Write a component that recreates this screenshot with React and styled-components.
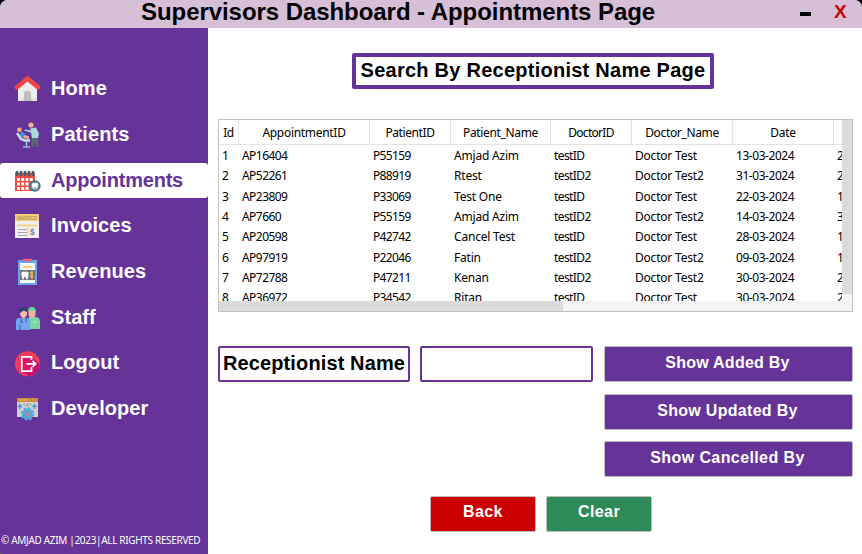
import React from "react";
import styled, { createGlobalStyle } from "styled-components";

const GlobalStyle = createGlobalStyle`
  * { box-sizing: border-box; }
  body { margin: 0; background: #000; overflow: hidden; }
`;

const purple = "#663399";
const ui = `"Liberation Sans", Arial, sans-serif`;
const tableFont = `"Noto Sans", sans-serif`;

const Window = styled.div`
  width: 862px;
  height: 554px;
  display: grid;
  grid-template-columns: 208px 1fr;
  grid-template-rows: 28px 1fr;
  background: #fff;
  border-radius: 8px 8px 0 2px;
  overflow: hidden;
  font-family: ${ui};
`;

const TitleBar = styled.header`
  grid-column: 1 / -1;
  background: #d8bfd8;
  display: flex;
  padding-left: 141px;
`;

const Title = styled.h1`
  margin: 0;
  width: 658px;
  height: 28px;
  font-size: 24px;
  line-height: 24px;
  letter-spacing: -0.06px;
  white-space: nowrap;
`;

const MinimizeButton = styled.button`
  width: 11px;
  height: 4px;
  margin: 12px 23px 0 1px;
  padding: 0;
  border: 0;
  background: #000;
`;

const CloseButton = styled.button`
  border: 0;
  padding: 0;
  height: 24px;
  background: none;
  color: #c00;
  font: bold 19px/24px ${ui};
`;

const Sidebar = styled.aside`
  background: ${purple};
  display: flex;
  flex-direction: column;
  justify-content: space-between;
`;

const Menu = styled.nav`
  padding-top: 43.2px;
  display: grid;
  grid-auto-rows: 35px;
  row-gap: 10.7px;
`;

const MenuItem = styled.a`
  display: flex;
  gap: 10px;
  padding-left: 14px;
  height: 35px;
  border-radius: 3px;
  background: ${(p) => (p.$active ? "#fff" : "transparent")};
  color: ${(p) => (p.$active ? purple : "#fff")};
  font-size: 20px;
  font-weight: bold;
  line-height: 34px;
  letter-spacing: ${(p) => p.$spacing || 0}px;
`;

const Icon = styled.svg`
  width: 27px;
  height: 27px;
  margin-top: 4.2px;
  flex: none;
`;

const Copyright = styled.footer`
  height: 27px;
  padding-left: 1px;
  color: #fff;
  font: 10px/26px ${tableFont};
  letter-spacing: -0.33px;
  white-space: nowrap;
`;

const Main = styled.main`
  padding: 25px 9px 0 10px;
  display: flex;
  flex-direction: column;
`;

const PageHeading = styled.h2`
  align-self: center;
  margin: 0 5px 0 0;
  width: 362px;
  height: 36px;
  border: 4px solid ${purple};
  border-radius: 2px;
  font-size: 20px;
  line-height: 26px;
  letter-spacing: 0.25px;
  text-align: center;
  white-space: nowrap;
`;

const TableFrame = styled.section`
  margin-top: 30px;
  width: 635px;
  height: 193px;
  border: 1px solid #c2c2c2;
  display: grid;
  grid-template-columns: 623px 10px;
  grid-template-rows: 181px 10px;
`;

const Viewport = styled.div`
  overflow: hidden;
`;

const Table = styled.table`
  width: 724px;
  table-layout: fixed;
  border-collapse: separate;
  border-spacing: 0;
  font: 12px/20px ${tableFont};
  color: #000;
`;

const HeadCell = styled.th`
  height: 25px;
  padding: 1px 0 0;
  border-right: 1px solid #e4e4e4;
  border-bottom: 1px solid #e4e4e4;
  font-weight: normal;
  line-height: 23px;
  letter-spacing: ${(p) => p.$spacing}px;
  text-align: center;
`;

const Cell = styled.td`
  height: 20.33px;
  padding: 0 0 0 3px;
  line-height: 20px;
  white-space: nowrap;
  letter-spacing: ${(p) => p.$spacing}px;
`;

const TableBody = styled.tbody`
  &::before { content: ""; display: block; height: 1px; }
`;

const VerticalTrack = styled.div`
  grid-row: 1 / 3;
  grid-column: 2;
  background: #f4f4f4;
`;

const VerticalThumb = styled.div`
  height: 174px;
  background: #dbdbdb;
`;

const HorizontalTrack = styled.div`
  background: #f4f4f4;
`;

const HorizontalThumb = styled.div`
  width: 344px;
  height: 10px;
  background: #dbdbdb;
`;

const SearchRow = styled.div`
  margin-top: 34px;
  display: grid;
  grid-template-columns: 192px 173px 249px;
  column-gap: 10px;
`;

const FieldLabel = styled.label`
  height: 36px;
  border: 2px solid ${purple};
  border-radius: 2px;
  font-size: 20px;
  font-weight: bold;
  line-height: 31px;
  letter-spacing: 0.12px;
  text-align: center;
  white-space: nowrap;
`;

const NameInput = styled.input`
  width: 100%;
  height: 36px;
  border: 2px solid ${purple};
  border-radius: 2px;
  background: #fff;
  outline: none;
`;

const ActionColumn = styled.div`
  display: grid;
  row-gap: 11.6px;
  padding-left: 1px;
`;

const Button = styled.button`
  width: ${(p) => p.$width || 249}px;
  height: 36px;
  padding: 0 ${(p) => (p.$width ? 0 : 2)}px ${(p) => (p.$width ? 4 : 2)}px 0;
  border: 1px solid #bdbdbd;
  border-radius: 2px;
  background: ${(p) => p.$color || purple};
  color: #fff;
  font: bold 16px/30px ${ui};
  letter-spacing: ${(p) => p.$spacing || 0.4}px;
`;

const FooterActions = styled.div`
  margin: 18.8px 0 0 212px;
  display: flex;
  gap: 10px;
`;

const icons = {
  Home: (
    <>
      <path d="M4 11 13.5 3 23 11v15H4z" fill="#ededed" />
      <path d="M4 23h19v3H4z" fill="#e2e2e2" />
      <path d="M10 26v-8q0-2 2-2h3q2 0 2 2v8z" fill="#bfbfbf" />
      <path d="m3 12.3 10.5-8.8L24 12.3" fill="none" stroke="#eb4747" strokeWidth="4.6" strokeLinejoin="round" strokeLinecap="round" />
    </>
  ),
  Patients: (
    <>
      <circle cx="17" cy="4" r="2.6" fill="#f5b092" />
      <path d="m16 7.5 6-1 3 6-1 5h-6l-1-6-7-2 1-1 6 1z" fill="#abd7dd" />
      <path d="M18 17h6l1 9h-3l-1-6-1 6h-3z" fill="#596878" />
      <circle cx="5.4" cy="8.8" r="2.3" fill="#f5a68d" />
      <path d="m7 10 5 4-1 4-5-3z" fill="#3f98e9" />
      <path d="m11 14 4 1.5V18l-6-1z" fill="#f5aa8d" />
      <path d="m3 12 4 6 4 1.5h5" fill="none" stroke="#c8e5e9" strokeWidth="2.3" />
      <path d="M12.5 20v5M9 26h7" stroke="#94c9d0" strokeWidth="1.5" />
    </>
  ),
  Appointments: (
    <>
      <path d="M1 6h20v18H1z" fill="#e94d40" />
      <path d="M3 12.5h17M3 17h14M3 21.5h13" stroke="#fff" strokeWidth="2.8" strokeDasharray="2.9 1.4" />
      <path d="M1 6.5h20" stroke="#b75549" strokeWidth="2" />
      <path d="M3 4v5M7 4v5M11 4v5M15 4v5M19 4v5" stroke="#3c6478" strokeWidth="2.2" />
      <circle cx="21" cy="19" r="4.8" fill="#8faebb" stroke="#457185" strokeWidth="1.7" />
      <path d="M18 16.4q1.5-1 3 0 1.5-1 3 0 .5 2.8-1.4 5.4L21 19.7l-1.6 2.1q-1.9-2.6-1.4-5.4z" fill="#fff" />
    </>
  ),
  Invoices: (
    <>
      <path d="M1 2h24v24H1z" fill="#f1eff1" />
      <path d="M1 2h24v7H1z" fill="#f4cc78" />
      <text x="13" y="7.6" fill="#a99573" fontFamily="Liberation Sans" fontSize="5.4" fontWeight="bold" textLength="20" lengthAdjust="spacingAndGlyphs" textAnchor="middle">INVOICE</text>
      <path d="M3 13.5h20" stroke="#f5d289" strokeWidth="2" />
      <path d="M4 17.5h9M4 20.5h9M4 23.5h9" stroke="#a5a3af" strokeWidth="1" />
      <path d="M14 15v10" stroke="#f5d289" />
      <text x="15.9" y="22.8" fill="#7e819a" fontFamily="Liberation Sans" fontSize="8.5">$</text>
    </>
  ),
  Revenues: (
    <>
      <path d="M4 2h19v25H4z" fill="#6aa6ee" />
      <path d="M6 5h15v20H6z" fill="#f8f8f8" />
      <path d="M10 3.5V2h7v1.5" stroke="#eb5d7b" strokeWidth="2.5" fill="none" />
      <path d="M9 9h9" stroke="#f6cf70" strokeWidth="2" />
      <path d="M6 12h15v10H6z" fill="#747178" />
      <path d="M7.5 14q3-1 3.5 0 .5-1 3.5 0v4l-1 3.5h-1L11 18l-1.5 3.5h-1l-1-3.5z" fill="#fff" />
      <path d="M18 13v8M16 15h3M16 18h3" stroke="#e7bb58" strokeWidth="1.5" />
    </>
  ),
  Staff: (
    <>
      <path d="m14 14 2-1h6l3 1 1 3v8H14z" fill="#76d6a4" />
      <path d="M2 26v-9q0-3 4-3h6q4 0 4 3v9z" fill="#72a5f2" />
      <path d="M6 7q0-3 3.5-3T13 7v3q-1 4-3.5 4T6 10z" fill="#f7b9aa" />
      <path d="M5 7q-.5-4 3-3.5 5-.7 5 1.5v3L9.5 6.5 6 9z" fill="#303d71" />
      <path d="M14.5 7q1-2 3.5-2t3.5 2v4q-1 3-3.5 3T14.5 11z" fill="#f3b29d" />
      <path d="M14 7.5q0-4.5 4-4.5t4 4.5l-4-1z" fill="#6bd498" />
      <path d="M7 14.5V17q0 2.5 2 1M12 14v4M6 21v5" stroke="#405888" fill="none" strokeWidth="1" />
      <path d="M19.5 18h3" stroke="#d8f4e4" />
    </>
  ),
  Logout: (
    <>
      <circle cx="13.5" cy="13.8" r="12.5" fill="#f73b5c" />
      <path d="m17 6.5 9 8q-1 10-11 11.5l-7-5z" fill="#c5126e" />
      <path d="M8 7h9v14H8z" fill="#d9156a" />
      <path d="M17.5 10V6.8H7.8v14.4h9.7V17M12.5 13.8h9M18.5 10.8l3 3-3 3" fill="none" stroke="#fff" strokeWidth="1.7" />
    </>
  ),
  Developer: (
    <>
      <path d="M3 3h21v19H3z" fill="#d1d0d3" />
      <path d="M3 3h21v4H3z" fill="#c68c38" />
      <path d="M5 5h9M18 5h1M21 5h1" stroke="#f7c05c" />
      <path d="M6 14v-4m-2 2 2-2 2 2m12.5 2v-4m-2 2 2-2 2 2" stroke="#589cce" fill="none" strokeWidth="1.7" />
      <path d="m11 8.5-1 1 1 1m5-2 1 1-1 1m-2-2-1 3" fill="none" stroke="#62636d" strokeWidth=".8" />
      <circle cx="13.5" cy="19" r="4.2" fill="#98928e" stroke="#4daae5" strokeWidth="2.8" />
      <circle cx="13.5" cy="19" r="6" fill="none" stroke="#4daae5" strokeWidth="1.6" strokeDasharray="2.6 2.1" />
    </>
  ),
};

const menu = ["Home", "Patients", "Appointments", "Invoices", "Revenues", "Staff", "Logout", "Developer"];

const columns = [
  { name: "Id", width: 20, head: -0.4, body: 0 },
  { name: "AppointmentID", width: 131, head: -0.3, body: -0.55 },
  { name: "PatientID", width: 81, head: -0.4, body: -0.65 },
  { name: "Patient_Name", width: 100, head: -0.35, body: -0.2 },
  { name: "DoctorID", width: 81, head: -0.7, body: -0.6 },
  { name: "Doctor_Name", width: 101, head: -0.35, body: -0.2 },
  { name: "Date", width: 101, head: -0.3, body: -0.45 },
  { name: "", width: 109, head: 0, body: 0 },
];

const rows = [
  ["1", "AP16404", "P55159", "Amjad Azim", "testID", "Doctor Test", "13-03-2024", "2"],
  ["2", "AP52261", "P88919", "Rtest", "testID2", "Doctor Test2", "31-03-2024", "2"],
  ["3", "AP23809", "P33069", "Test One", "testID", "Doctor Test", "22-03-2024", "1"],
  ["4", "AP7660", "P55159", "Amjad Azim", "testID2", "Doctor Test2", "14-03-2024", "3"],
  ["5", "AP20598", "P42742", "Cancel Test", "testID", "Doctor Test", "28-03-2024", "1"],
  ["6", "AP97919", "P22046", "Fatin", "testID2", "Doctor Test2", "09-03-2024", "1"],
  ["7", "AP72788", "P47211", "Kenan", "testID2", "Doctor Test2", "30-03-2024", "2"],
  ["8", "AP36972", "P34542", "Ritan", "testID", "Doctor Test", "30-03-2024", "2"],
];

export default function App() {
  return (
    <>
      <GlobalStyle />
      <Window>
        <TitleBar>
          <Title>Supervisors Dashboard - Appointments Page</Title>
          <MinimizeButton aria-label="Minimize" />
          <CloseButton>X</CloseButton>
        </TitleBar>
        <Sidebar>
          <Menu>
            {menu.map((name) => (
              <MenuItem key={name} $active={name === "Appointments"} $spacing={name === "Appointments" ? -0.2 : 0.08}>
                <Icon viewBox="0 0 27 27">{icons[name]}</Icon>
                {name}
              </MenuItem>
            ))}
          </Menu>
          <Copyright>© AMJAD AZIM |2023|ALL RIGHTS RESERVED</Copyright>
        </Sidebar>
        <Main>
          <PageHeading>Search By Receptionist Name Page</PageHeading>
          <TableFrame>
            <Viewport>
              <Table>
                <colgroup>
                  {columns.map((c) => <col key={c.name} width={c.width} />)}
                </colgroup>
                <thead>
                  <tr>
                    {columns.map((c) => <HeadCell key={c.name} $spacing={c.head}>{c.name}</HeadCell>)}
                  </tr>
                </thead>
                <TableBody>
                  {rows.map((row) => (
                    <tr key={row[0]}>
                      {row.map((value, i) => <Cell key={i} $spacing={columns[i].body}>{value}</Cell>)}
                    </tr>
                  ))}
                </TableBody>
              </Table>
            </Viewport>
            <VerticalTrack><VerticalThumb /></VerticalTrack>
            <HorizontalTrack><HorizontalThumb /></HorizontalTrack>
          </TableFrame>
          <SearchRow>
            <FieldLabel htmlFor="receptionist">Receptionist Name</FieldLabel>
            <NameInput id="receptionist" />
            <ActionColumn>
              <Button $spacing={0.25}>Show Added By</Button>
              <Button $spacing={0.3}>Show Updated By</Button>
              <Button>Show Cancelled By</Button>
            </ActionColumn>
          </SearchRow>
          <FooterActions>
            <Button $width={106} $color="#cc0000">Back</Button>
            <Button $width={106} $color="#2e8b57">Clear</Button>
          </FooterActions>
        </Main>
      </Window>
    </>
  );
}
